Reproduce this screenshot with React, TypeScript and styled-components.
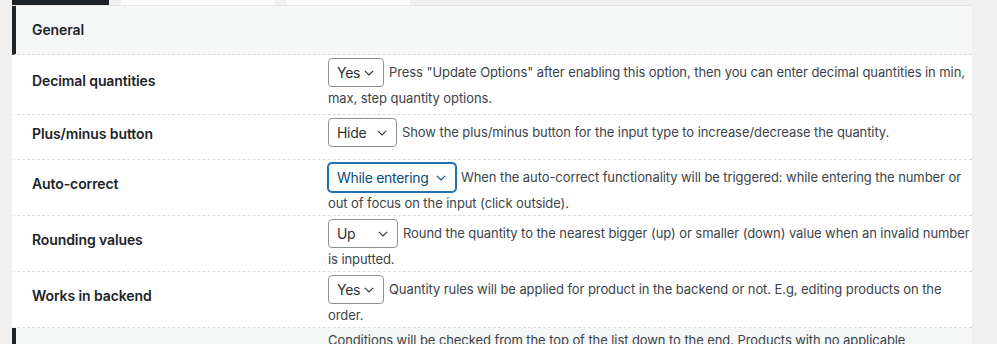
import styled, { createGlobalStyle } from "styled-components";

const GlobalStyle = createGlobalStyle`
  body {
    margin: 0;
    background: #f0f0f1;
    font-family: Inter, "Noto Sans", sans-serif;
    -webkit-font-smoothing: antialiased;
  }
`;

type Setting = {
  label: string;
  value: string;
  width: number;
  focused?: boolean;
  text: string;
  h: number;
};

const settings: Setting[] = [
  {
    label: "Decimal quantities",
    value: "Yes",
    width: 56,
    text: 'Press "Update Options" after enabling this option, then you can enter decimal quantities in min, max, step quantity options.',
    h: 59,
  },
  {
    label: "Plus/minus button",
    value: "Hide",
    width: 69,
    text: "Show the plus/minus button for the input type to increase/decrease the quantity.",
    h: 44,
  },
  {
    label: "Auto-correct",
    value: "While entering",
    width: 128,
    focused: true,
    text: "When the auto-correct functionality will be triggered: while entering the number or out of focus on the input (click outside).",
    h: 53,
  },
  {
    label: "Rounding values",
    value: "Up",
    width: 70,
    text: "Round the quantity to the nearest bigger (up) or smaller (down) value when an invalid number is inputted.",
    h: 54,
  },
  {
    label: "Works in backend",
    value: "Yes",
    width: 56,
    text: "Quantity rules will be applied for product in the backend or not. E.g, editing products on the order.",
    h: 55,
  },
];

function Chevron() {
  return (
    <svg width="10" height="6" viewBox="0 0 10 6" fill="none">
      <polyline points="0.8,0.8 5,5 9.2,0.8" stroke="currentColor" strokeWidth="1.1" />
    </svg>
  );
}

export default function App() {
  return (
    <>
      <GlobalStyle />
      <Page>
        <Tabs>
          <Tab w={97} active />
          <Tab w={154} />
          <Tab w={123} />
        </Tabs>
        <Panel>
          <Header>
            <HeaderTitle>General</HeaderTitle>
          </Header>
          {settings.map((s) => (
            <Row key={s.label} h={s.h}>
              <Label>{s.label}</Label>
              <Value>
                <SelectBox w={s.width} focused={s.focused}>
                  <span>{s.value}</span>
                  <Chevron />
                </SelectBox>
                {s.text}
              </Value>
            </Row>
          ))}
          <Header>
            <HeaderTitle />
            <HeaderDesc>
              Conditions will be checked from the top of the list down to the end. Products with no applicable
              conditions will use the default quantity rules.
            </HeaderDesc>
          </Header>
        </Panel>
      </Page>
    </>
  );
}

const Page = styled.div`
  width: 960px;
  padding-left: 12px;
`;

const Tabs = styled.div`
  display: flex;
  gap: 12px;
  height: 5px;
`;

const Tab = styled.div<{ w: number; active?: boolean }>`
  width: ${(p) => p.w}px;
  background: ${(p) => (p.active ? "#1d2327" : "#ffffff")};
`;

const Panel = styled.div`
  background: #ffffff;
  border-top: 1px solid #e4e4e4;
`;

const Header = styled.div`
  display: grid;
  grid-template-columns: 312px 1fr;
  min-height: 48px;
  background: #f6f7f7;
  border-left: 4px solid #1d2327;
  border-bottom: 1px dashed #dcdcde;
`;

const HeaderTitle = styled.div`
  padding-left: 16px;
  padding-bottom: 1px;
  display: flex;
  align-items: center;
  font-size: 14px;
  font-weight: 600;
  letter-spacing: -0.1px;
  color: #1d2327;
`;

const HeaderDesc = styled.div`
  padding: 2px 20px 0 0;
  font-size: 13px;
  line-height: 20px;
  letter-spacing: -0.08px;
  color: #3c434a;
`;

const Row = styled.div<{ h: number }>`
  display: grid;
  grid-template-columns: 312px 1fr;
  min-height: ${(p) => p.h}px;
  border-left: 4px solid transparent;
  border-bottom: 1px dashed #dcdcde;
`;

const Label = styled.div`
  padding: 0 0 8px 16px;
  display: flex;
  align-items: center;
  font-size: 14px;
  font-weight: 600;
  letter-spacing: -0.1px;
  color: #1d2327;
`;

const Value = styled.div`
  padding: 3px 0 2px 0;
  font-size: 13px;
  line-height: 20px;
  letter-spacing: -0.08px;
  color: #3c434a;
`;

const SelectBox = styled.span<{ w: number; focused?: boolean }>`
  display: inline-flex;
  align-items: center;
  justify-content: space-between;
  box-sizing: border-box;
  width: ${(p) => p.w}px;
  height: 29px;
  margin: 0 5px 1px 0;
  padding: 0 9px 0 8px;
  vertical-align: middle;
  border: 1px solid ${(p) => (p.focused ? "#2271b1" : "#8c8f94")};
  box-shadow: ${(p) => (p.focused ? "0 0 0 1px #2271b1" : "none")};
  border-radius: 4px;
  font-size: 14px;
  line-height: 1;
  letter-spacing: -0.3px;
  color: ${(p) => (p.focused ? "#0a4b78" : "#2c3338")};
  background: #ffffff;
`;
